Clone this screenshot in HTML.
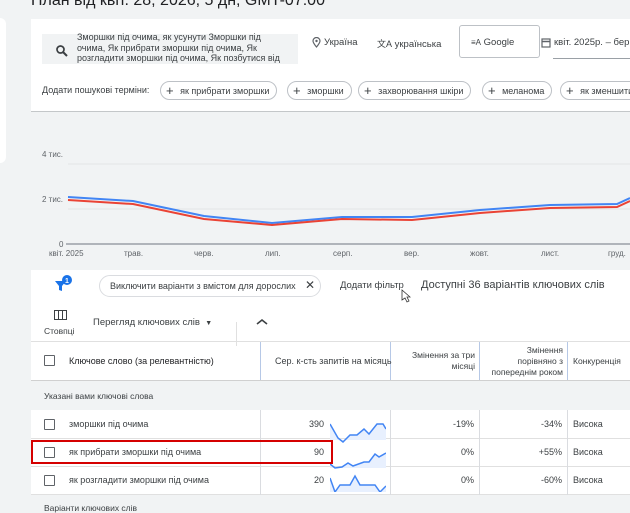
<!DOCTYPE html>
<html><head><meta charset="utf-8"><style>
*{margin:0;padding:0;box-sizing:border-box}
body{width:630px;height:512px;overflow:hidden;background:#f1f3f4;font-family:"Liberation Sans","DejaVu Sans",sans-serif;color:#3c4043;position:relative}
.a{position:absolute;white-space:nowrap}
.s{font-size:9.5px}
.chip{position:absolute;top:81px;height:19px;border:1px solid #bdc1c6;border-radius:10px;font-size:9px;line-height:17px;padding:0 7px 0 5px;color:#3c4043;background:#fff;white-space:nowrap;overflow:hidden}
.chip b{font-weight:normal;font-size:13px;vertical-align:-1px;margin-right:4px}
.cb{position:absolute;left:44px;width:11px;height:11px;border:1.5px solid #5f6368;border-radius:1px}
.vl{position:absolute;width:1px;background:#dadce0}
.hl{position:absolute;left:31px;right:0;height:1px;background:#e0e0e0}
</style></head><body>
<div style="position:absolute;left:0;top:18px;width:6px;height:145px;background:#fff;border-radius:0 6px 6px 0"></div>
<div class="a" style="left:31px;top:-8px;font-size:16px;color:#202124">План від квіт. 28, 2026, 5 дн, GMT-07:00</div>
<div style="position:absolute;left:31px;top:19px;width:599px;height:93px;background:#fff;border-bottom:1px solid #c4c7c9"></div>
<div style="position:absolute;left:42px;top:34px;width:256px;height:30px;background:#f1f3f4"></div>
<svg class="a" style="left:56px;top:45px" width="12" height="12"><circle cx="4.5" cy="4.5" r="3.5" fill="none" stroke="#3c4043" stroke-width="1.7"/><path d="M7 7l4 4" stroke="#3c4043" stroke-width="2"/></svg>
<div class="a" style="left:77px;top:32px;font-size:9px;line-height:10.5px;color:#3c4043">Зморшки під очима, як усунути Зморшки під<br>очима, Як прибрати зморшки під очима, Як<br>розгладити зморшки під очима, Як позбутися від</div>
<svg class="a" style="left:312px;top:37px" width="9" height="11"><path d="M4.5 10C2 7 1 5.5 1 4a3.5 3.5 0 017 0c0 1.5-1 3-3.5 6z" fill="none" stroke="#5f6368" stroke-width="1.2"/><circle cx="4.5" cy="4" r="1.2" fill="#5f6368"/></svg>
<div class="a s" style="left:324px;top:37px">Україна</div>
<div class="a s" style="left:377px;top:37px"><span style="font-size:9px">文A</span> українська</div>
<div style="position:absolute;left:459px;top:25px;width:81px;height:33px;border:1px solid #bdc1c6;border-radius:3px;background:#fff"></div>
<div class="a s" style="left:471px;top:37px"><span style="font-size:8px">≡A</span> Google</div>
<svg class="a" style="left:541px;top:37px" width="10" height="11"><rect x="1" y="2" width="8" height="8" fill="none" stroke="#5f6368" stroke-width="1.2"/><path d="M1 4.5h8" stroke="#5f6368" stroke-width="1.5"/></svg>
<div class="a s" style="left:554px;top:37px">квіт. 2025р. – бер.</div>
<div style="position:absolute;left:553px;top:58px;width:77px;height:1px;background:#9aa0a6"></div>
<div class="a" style="left:42px;top:85px;font-size:9px">Додати пошукові терміни:</div>
<div class="chip" style="left:160px"><b>+</b> як прибрати зморшки</div>
<div class="chip" style="left:287px"><b>+</b> зморшки</div>
<div class="chip" style="left:358px"><b>+</b> захворювання шкіри</div>
<div class="chip" style="left:482px"><b>+</b> меланома</div>
<div class="chip" style="left:560px;width:80px"><b>+</b> як зменшити</div>
<svg class="a" style="left:0;top:112px" width="630" height="158">
<line x1="68" y1="52" x2="630" y2="52" stroke="#e3e4e6"/>
<line x1="68" y1="97" x2="630" y2="97" stroke="#e3e4e6"/>
<line x1="66" y1="132" x2="630" y2="132" stroke="#9aa0a6" stroke-width="1.5"/>
<g font-size="8" fill="#5f6368" font-family="Liberation Sans"><text x="42" y="45">4 тис.</text><text x="42" y="90">2 тис.</text><text x="59" y="135">0</text>
<text x="49" y="144">квіт. 2025</text><text x="124" y="144">трав.</text><text x="194" y="144">черв.</text><text x="265" y="144">лип.</text><text x="333" y="144">серп.</text><text x="404" y="144">вер.</text><text x="470" y="144">жовт.</text><text x="541" y="144">лист.</text><text x="608" y="144">груд.</text></g>
<polyline fill="none" stroke="#4285f4" stroke-width="2" points="68,85 133,89 204,104 272,111 342,105 412,105 480,98 550,93 617,92 630,86"/>
<polyline fill="none" stroke="#ea4335" stroke-width="2" points="68,88 133,92 204,107 272,113 342,107 412,108 480,101 550,96 617,95 630,89"/>
</svg>
<div style="position:absolute;left:31px;top:270px;width:599px;height:242px;background:#fff"></div>
<svg class="a" style="left:54px;top:275px" width="20" height="18"><path d="M1 6h11l-4 5v5l-3-1v-4z" fill="#1a73e8"/><circle cx="13" cy="5" r="5" fill="#1a73e8"/><text x="11" y="8" font-size="7" fill="#fff" font-family="Liberation Sans" font-weight="bold">1</text></svg>
<div style="position:absolute;left:99px;top:275px;width:222px;height:22px;border:1px solid #dadce0;border-radius:11px"></div>
<div class="a" style="left:110px;top:281px;font-size:9px">Виключити варіанти з вмістом для дорослих</div>
<div class="a" style="left:305px;top:278px;font-size:12px">✕</div>
<div class="a s" style="left:340px;top:280px">Додати фільтр</div>
<div class="a" style="left:421px;top:279px;font-size:11px">Доступні 36 варіантів ключових слів</div>
<svg class="a" style="left:54px;top:310px" width="13" height="10"><rect x="0.5" y="0.5" width="12" height="9" fill="none" stroke="#3c4043"/><path d="M4.5 0v10M8.5 0v10" stroke="#3c4043"/></svg>
<div class="a" style="left:44px;top:326px;font-size:8.5px">Стовпці</div>
<div class="a s" style="left:93px;top:317px">Перегляд ключових слів &nbsp;<span style="font-size:7px">▼</span></div>
<div style="position:absolute;left:236px;top:322px;width:1px;height:24px;background:#e0e0e0"></div>
<svg class="a" style="left:256px;top:318px" width="12" height="8"><path d="M1 6l5-4 5 4" fill="none" stroke="#3c4043" stroke-width="1.6"/></svg>
<div class="hl" style="top:341px"></div>
<div class="hl" style="top:380px;background:#d0d0d0"></div>
<div class="vl" style="left:260px;top:342px;height:38px;background:#b6c8e6"></div>
<div class="vl" style="left:390px;top:342px;height:38px;background:#b6c8e6"></div>
<div class="vl" style="left:479px;top:342px;height:38px;background:#b6c8e6"></div>
<div class="vl" style="left:567px;top:342px;height:38px;background:#b6c8e6"></div>
<div class="cb" style="top:355px"></div>
<div class="a" style="left:69px;top:356px;font-size:9px;color:#202124">Ключове слово (за релевантністю)</div>
<div class="a" style="left:275px;top:356px;font-size:9px">Сер. к-сть запитів на місяць</div>
<div class="a" style="left:395px;top:350px;font-size:8.5px;text-align:right;width:80px;line-height:11px;white-space:normal">Змінення за три місяці</div>
<div class="a" style="left:490px;top:345px;font-size:8.5px;text-align:right;width:73px;line-height:11px;white-space:normal">Змінення порівняно з попереднім роком</div>
<div class="a" style="left:573px;top:356px;font-size:8.5px">Конкуренція</div>
<div style="position:absolute;left:31px;top:381px;width:599px;height:29px;background:#f1f3f4"></div>
<div class="a" style="left:44px;top:391px;font-size:8.5px">Указані вами ключові слова</div>
<div style="position:absolute;left:31px;top:495px;width:599px;height:17px;background:#f1f3f4"></div>
<div class="a" style="left:44px;top:503px;font-size:8.5px">Варіанти ключових слів</div>
<div class="hl" style="top:438px"></div><div class="hl" style="top:466px"></div><div class="hl" style="top:494px"></div>
<div class="vl" style="left:260px;top:410px;height:85px"></div>
<div class="vl" style="left:390px;top:410px;height:85px"></div>
<div class="vl" style="left:479px;top:410px;height:85px"></div>
<div class="vl" style="left:567px;top:410px;height:85px"></div>
<div class="cb" style="top:419px"></div><div class="cb" style="top:447px"></div><div class="cb" style="top:475px"></div>
<div class="a" style="left:69px;top:419px;font-size:9px">зморшки під очима</div>
<div class="a" style="left:69px;top:447px;font-size:9px">як прибрати зморшки під очима</div>
<div class="a" style="left:69px;top:475px;font-size:9px">як розгладити зморшки під очима</div>
<div class="a" style="left:296px;top:419px;font-size:9px;width:28px;text-align:right">390</div>
<div class="a" style="left:296px;top:447px;font-size:9px;width:28px;text-align:right">90</div>
<div class="a" style="left:296px;top:475px;font-size:9px;width:28px;text-align:right">20</div>
<svg class="a" style="left:330px;top:412px" width="56" height="80">
<path d="M0 12L8 26 13 30 20 23 27 23 34 17 39 22 47 12 53 12 56 17V28H0Z" fill="#e8f0fe"/>
<polyline fill="none" stroke="#4285f4" stroke-width="1.5" points="0,12 8,26 13,30 20,23 27,23 34,17 39,22 47,12 53,12 56,17"/>
<path d="M0 52L5 56 12 55 18 51 23 54 34 50 39 50 45 42 49 45 56 41V56H0Z" fill="#e8f0fe"/>
<polyline fill="none" stroke="#4285f4" stroke-width="1.5" points="0,52 5,56 12,55 18,51 23,54 34,50 39,50 45,42 49,45 56,41"/>
<path d="M0 66L5 80 10 73 20 73 25 64 30 73 45 73 50 80 56 74V82H0Z" fill="#e8f0fe"/>
<polyline fill="none" stroke="#4285f4" stroke-width="1.5" points="0,66 5,80 10,73 20,73 25,64 30,73 45,73 50,80 56,74"/>
</svg>
<div class="a" style="left:420px;top:419px;font-size:9px;width:54px;text-align:right">-19%</div>
<div class="a" style="left:420px;top:447px;font-size:9px;width:54px;text-align:right">0%</div>
<div class="a" style="left:420px;top:475px;font-size:9px;width:54px;text-align:right">0%</div>
<div class="a" style="left:508px;top:419px;font-size:9px;width:54px;text-align:right">-34%</div>
<div class="a" style="left:508px;top:447px;font-size:9px;width:54px;text-align:right">+55%</div>
<div class="a" style="left:508px;top:475px;font-size:9px;width:54px;text-align:right">-60%</div>
<div class="a" style="left:573px;top:419px;font-size:9px">Висока</div>
<div class="a" style="left:573px;top:447px;font-size:9px">Висока</div>
<div class="a" style="left:573px;top:475px;font-size:9px">Висока</div>
<div style="position:absolute;left:31px;top:440px;width:302px;height:24px;border:2px solid #d50000"></div>
<svg class="a" style="left:401px;top:289px" width="10" height="14"><path d="M1 1v10l3-2 2 4 2-1-2-4h3z" fill="#fff" stroke="#333" stroke-width="0.8"/></svg>
</body></html>
